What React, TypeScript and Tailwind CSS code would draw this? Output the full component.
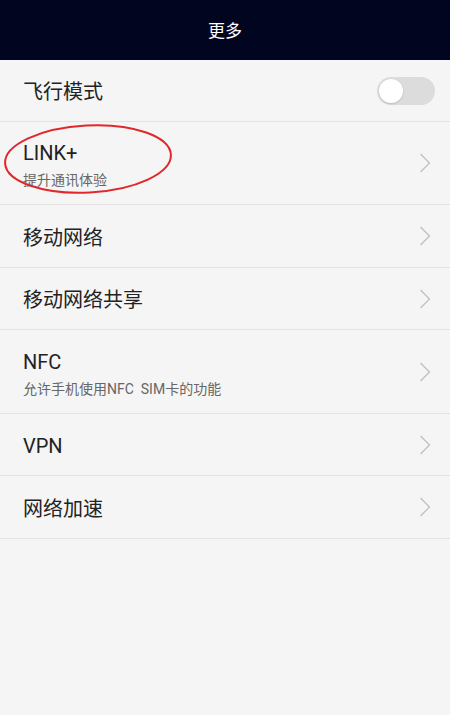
const font = { fontFamily: 'Roboto, "Noto Sans CJK SC", sans-serif' };

type Item = {
  title: string;
  subtitle?: string;
  toggle?: boolean;
  height: string;
};

const items: Item[] = [
  { title: '飞行模式', toggle: true, height: 'h-[62px]' },
  { title: 'LINK+', subtitle: '提升通讯体验', height: 'h-[83px]' },
  { title: '移动网络', height: 'h-[63px]' },
  { title: '移动网络共享', height: 'h-[62px]' },
  { title: 'NFC', subtitle: '允许手机使用NFC  SIM卡的功能', height: 'h-[84px]' },
  { title: 'VPN', height: 'h-[62px]' },
  { title: '网络加速', height: 'h-[63px]' },
];

function Toggle() {
  return (
    <div className="flex h-[28px] w-[58px] items-center rounded-full bg-[#dcdcdc] px-[2px]">
      <div className="h-[24px] w-[24px] rounded-full bg-white shadow-[0_1px_2px_rgba(0,0,0,0.15)]" />
    </div>
  );
}

function Chevron() {
  return (
    <svg width="12" height="20" viewBox="0 0 12 20" className="mr-[1px]">
      <polyline
        points="1.5,1 10.5,10 1.5,19"
        fill="none"
        stroke="#c2c2c2"
        strokeWidth="1.4"
        strokeLinejoin="miter"
      />
    </svg>
  );
}

function Row({ item }: { item: Item }) {
  return (
    <div className={`flex items-center border-b border-[#e2e2e2] pl-[23px] pr-[18px] ${item.height}`}>
      <div className="flex flex-1 flex-col pt-[3px]">
        <span className="text-[20px] leading-[26px] text-[#222]">{item.title}</span>
        {item.subtitle && (
          <span className="mt-[5px] whitespace-pre text-[14px] leading-[18px] text-[#666]">
            {item.subtitle}
          </span>
        )}
      </div>
      {item.toggle ? (
        <div className="-mr-[3px]">
          <Toggle />
        </div>
      ) : (
        <Chevron />
      )}
    </div>
  );
}

export default function App() {
  return (
    <div className="min-h-[715px] w-[450px] bg-[#f5f5f5]" style={font}>
      {/* Header */}
      <div className="flex h-[60px] items-center justify-center bg-[#020520] pt-[3px]">
        <span className="text-[17px] text-white">更多</span>
      </div>

      <div className="relative">
        {items.map((item) => (
          <Row key={item.title} item={item} />
        ))}

        {/* red annotation circle */}
        <svg
          className="pointer-events-none absolute left-0 top-[60px]"
          width="180"
          height="80"
          viewBox="0 0 180 80"
        >
          <ellipse
            cx="88"
            cy="39"
            rx="83"
            ry="33.5"
            transform="rotate(-3 88 39)"
            fill="none"
            stroke="#e0282c"
            strokeWidth="2"
          />
        </svg>
      </div>
    </div>
  );
}
